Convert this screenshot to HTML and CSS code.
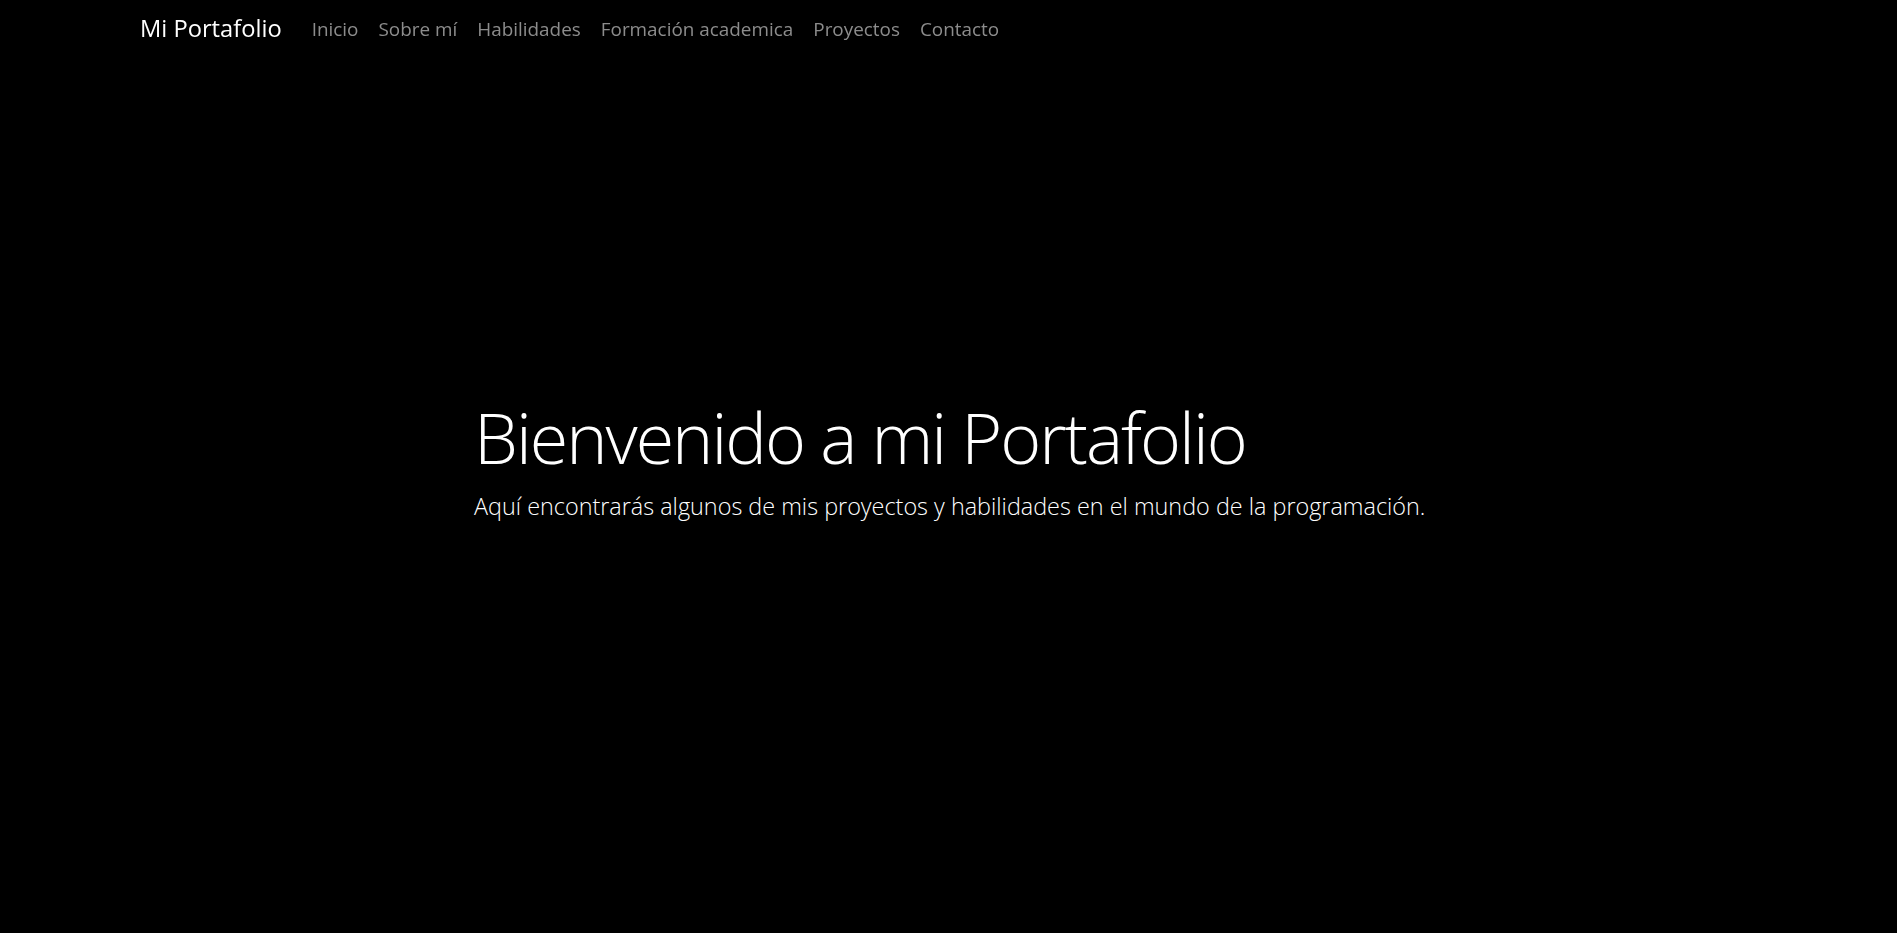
FILE: index.html
```html
<!DOCTYPE html>
<html lang="es">
<head>
<meta charset="utf-8">
<title>Mi Portafolio</title>
<link rel="stylesheet" href="styles.css">
</head>
<body>
<nav class="navbar">
  <div class="nav-inner">
    <a class="brand" href="#">Mi Portafolio</a>
    <ul class="nav-links">
      <li><a href="#">Inicio</a></li>
      <li><a href="#">Sobre mí</a></li>
      <li><a href="#">Habilidades</a></li>
      <li><a href="#">Formación academica</a></li>
      <li><a href="#">Proyectos</a></li>
      <li><a href="#">Contacto</a></li>
    </ul>
  </div>
</nav>
<header class="hero">
  <div class="hero-content">
    <h1 class="hero-title">Bienvenido a mi Portafolio</h1>
    <p class="hero-lead">Aquí encontrarás algunos de mis proyectos y habilidades en el mundo de la programación.</p>
  </div>
</header>
</body>
</html>
```

FILE: styles.css
```css
* { box-sizing: border-box; }
html, body { margin: 0; padding: 0; background: #000; }
body {
  font-family: "Open Sans", "Noto Sans", sans-serif;
  color: #fff;
  height: 933px;
  overflow: hidden;
}
.navbar {
  position: fixed;
  top: 0;
  left: 0;
  right: 0;
  padding: 10px 0;
  z-index: 10;
}
.nav-inner {
  display: flex;
  align-items: center;
  padding-left: 140px;
}
.brand {
  color: #fff;
  text-decoration: none;
  font-size: 23.7px;
  line-height: 37px;
  margin-right: 20px;
}
.nav-links {
  display: flex;
  list-style: none;
  margin: 0;
  padding: 0;
}
.nav-links a {
  display: block;
  padding: 0 10px;
  color: #8c8c8c;
  text-decoration: none;
  font-size: 18.9px;
  line-height: 30px;
}
.hero {
  height: 100vh;
  display: flex;
  align-items: center;
  padding-left: 474px;
  padding-bottom: 14px;
}
.hero-title {
  margin: 0 0 10px;
  font-size: 70px;
  font-weight: 300;
  line-height: 1.2;
  letter-spacing: -2px;
}
.hero-lead {
  margin: 0;
  font-size: 23.4px;
  font-weight: 300;
  line-height: 1.5;
}
```
